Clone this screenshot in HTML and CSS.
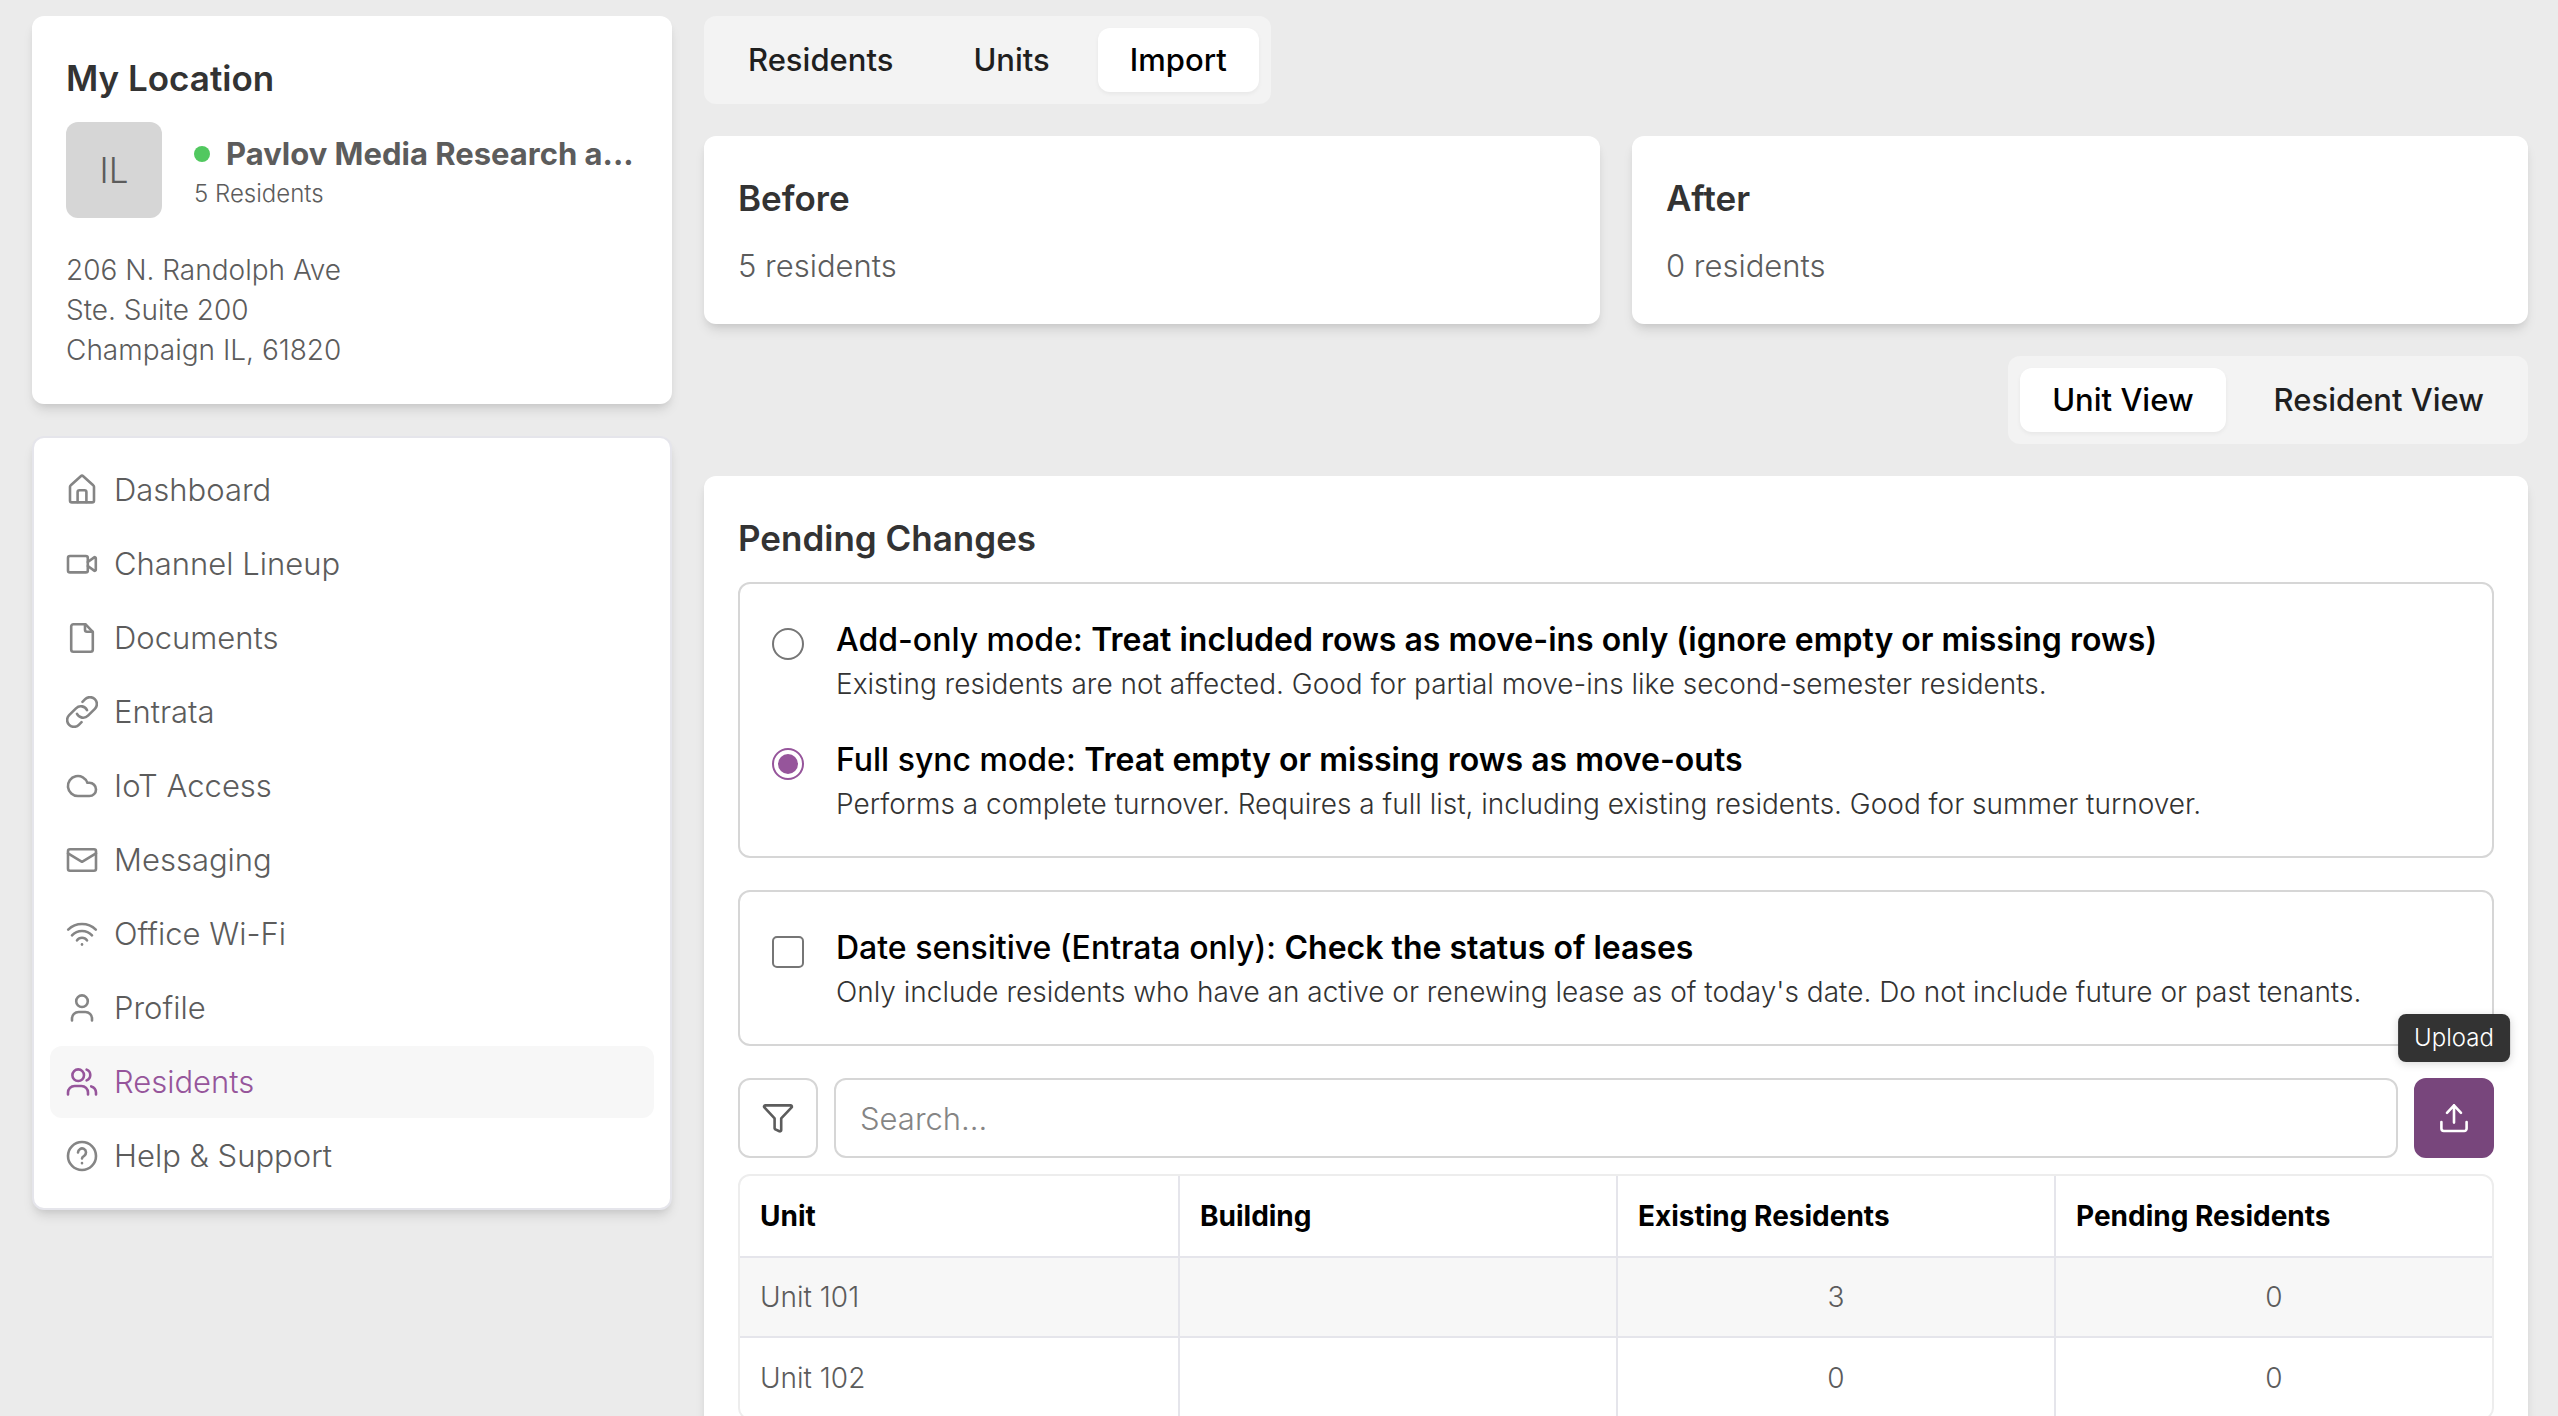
FILE: index.html
```html
<!DOCTYPE html>
<html lang="en">
<head>
    <meta charset="UTF-8">
    <meta name="viewport" content="width=device-width, initial-scale=1.0">
    <title>Residents - Import</title>
    <link rel="stylesheet" href="styles.css">
</head>
<body>
    <div class="layout">
        <!-- Sidebar -->
        <aside class="sidebar">
            <section class="card">
                <h2>My Location</h2>
                <div class="location">
                    <div class="avatar">IL</div>
                    <div class="location-info">
                        <div class="location-name"><span class="status-dot"></span><strong>Pavlov Media Research a...</strong></div>
                        <div class="location-count">5 Residents</div>
                    </div>
                </div>
                <address>
                    206 N. Randolph Ave<br>
                    Ste. Suite 200<br>
                    Champaign IL, 61820
                </address>
            </section>

            <nav class="menu">
                <a href="#dashboard">
                    <svg class="icon" viewBox="0 0 16 16"><path d="M2 6.400a1 1 0 0 1 .4-.8l5-4.500a.9.9 0 0 1 1.200 0l5 4.500a1 1 0 0 1 .4.800v6.800a1 1 0 0 1-1 1H3a1 1 0 0 1-1-1z"/><path d="M5.800 14V9a.9.9 0 0 1 .9-.9h2.600a.9.9 0 0 1 .9.900v5"/></svg>
                    Dashboard
                </a>
                <a href="#channels">
                    <svg class="icon" viewBox="0 0 16 16"><rect x="1" y="4" width="9.900" height="8.200" rx="1"/><path d="m10.900 7 3.200-2.300a.5.5 0 0 1 .8.400v5.800a.5.5 0 0 1-.8.400L10.900 9"/></svg>
                    Channel Lineup
                </a>
                <a href="#documents">
                    <svg class="icon" viewBox="0 0 16 16"><path d="M9.700 1.100H3.700a1.100 1.100 0 0 0-1.100 1.100v11.600a1.100 1.100 0 0 0 1.100 1.100h8.600a1.100 1.100 0 0 0 1.100-1.100V4.900z"/><path d="M9.500 1.200v2.700a1 1 0 0 0 1 1h2.800"/></svg>
                    Documents
                </a>
                <a href="#entrata">
                    <svg class="icon icon-link" viewBox="1.5 1.5 21 21"><path d="M13.190 8.688a4.500 4.500 0 0 1 1.242 7.244l-4.500 4.500a4.500 4.500 0 0 1-6.364-6.364l1.757-1.757m13.350-.622 1.757-1.757a4.500 4.500 0 0 0-6.364-6.364l-4.500 4.500a4.500 4.500 0 0 0 1.242 7.244" transform="matrix(0 -1 -1 0 24 24)"/></svg>
                    Entrata
                </a>
                <a href="#iot">
                    <svg class="icon" viewBox="0 0 16 16"><path d="M6 13h5.700a3.300 3.300 0 0 0 0-6.600h-1A5 5 0 1 0 6 13z"/></svg>
                    IoT Access
                </a>
                <a href="#messaging">
                    <svg class="icon" viewBox="0 0 16 16"><rect x="1" y="2.600" width="14" height="10.800" rx="1"/><path d="m1 4.700 7 4.200 7-4.200"/></svg>
                    Messaging
                </a>
                <a href="#wifi">
                    <svg class="icon" viewBox="0 0 16 16"><path d="M1.100 5.800a9.900 9.900 0 0 1 13.800 0M3 8.700a6.800 6.800 0 0 1 10 0M5.500 11.200a3 3 0 0 1 5 0"/><path d="M8 13.200v.1"/></svg>
                    Office Wi-Fi
                </a>
                <a href="#profile">
                    <svg class="icon" viewBox="0 0 16 16"><circle cx="8" cy="4.600" r="2.900"/><path d="M3 14.200v-.9A3.300 3.300 0 0 1 6.300 10h3.400a3.300 3.300 0 0 1 3.300 3.300v.9"/></svg>
                    Profile
                </a>
                <a href="#residents" class="active" aria-current="page">
                    <svg class="icon" viewBox="0 0 16 16"><circle cx="6.100" cy="4.600" r="2.900"/><path d="M1 14.200v-.9A3.300 3.300 0 0 1 4.300 10h3.400a3.300 3.300 0 0 1 3.300 3.300v.9M10.300 1.800a2.900 2.900 0 0 1 0 5.400M12.600 10.200a3.300 3.300 0 0 1 2.400 3.100v.9"/></svg>
                    Residents
                </a>
                <a href="#help">
                    <svg class="icon" viewBox="0 0 16 16"><circle cx="8" cy="8" r="7"/><path d="M6 6.200a2 2 0 1 1 3.100 1.700c-.7.400-1.100.7-1.100 1.300M8 11.500v.1"/></svg>
                    Help &amp; Support
                </a>
            </nav>
        </aside>

        <!-- Main content -->
        <main class="content">
            <div class="tabs">
                <button type="button">Residents</button>
                <button type="button">Units</button>
                <button type="button" class="active">Import</button>
            </div>

            <div class="summary">
                <section class="card">
                    <h2>Before</h2>
                    <p>5 residents</p>
                </section>
                <section class="card">
                    <h2>After</h2>
                    <p>0 residents</p>
                </section>
            </div>

            <div class="tabs tabs-right">
                <button type="button" class="active">Unit View</button>
                <button type="button">Resident View</button>
            </div>

            <section class="card">
                <h2>Pending Changes</h2>

                <div class="options">
                    <div class="option">
                        <input type="radio" name="mode" id="addOnly">
                        <label for="addOnly">
                            <span class="option-title">Add-only mode: <b>Treat included rows as move-ins only (ignore empty or missing rows)</b></span>
                            <span class="option-text">Existing residents are not affected. Good for partial move-ins like second-semester residents.</span>
                        </label>
                    </div>
                    <div class="option">
                        <input type="radio" name="mode" id="fullSync" checked>
                        <label for="fullSync">
                            <span class="option-title">Full sync mode: <b>Treat empty or missing rows as move-outs</b></span>
                            <span class="option-text">Performs a complete turnover. Requires a full list, including existing residents. Good for summer turnover.</span>
                        </label>
                    </div>
                </div>

                <div class="options">
                    <div class="option">
                        <input type="checkbox" id="dateSensitive">
                        <label for="dateSensitive">
                            <span class="option-title">Date sensitive (Entrata only): <b>Check the status of leases</b></span>
                            <span class="option-text">Only include residents who have an active or renewing lease as of today's date. Do not include future or past tenants.</span>
                        </label>
                    </div>
                </div>

                <div class="toolbar">
                    <button type="button" class="filter-btn" aria-label="Filter">
                        <svg class="icon" viewBox="0 0 16 16"><path d="M1.700 1.700h12.600a.6.6 0 0 1 .4 1.100L9.600 8.200v5.900a.6.6 0 0 1-.9.500l-2-.9a.6.6 0 0 1-.4-.5V8.200L1.300 2.800a.6.6 0 0 1 .4-1.100z"/></svg>
                    </button>
                    <input type="text" class="search" placeholder="Search..." aria-label="Search">
                    <div class="upload">
                        <button type="button" class="upload-btn" aria-label="Upload">
                            <svg class="icon" viewBox="0 0 16 16"><path d="M1.700 10v3.300a1.200 1.200 0 0 0 1.200 1.200h10.200a1.200 1.200 0 0 0 1.200-1.200V10M8 10.300V1.700M4.500 5.400 8 1.700l3.500 3.700"/></svg>
                        </button>
                        <span class="tooltip" role="tooltip">Upload</span>
                    </div>
                </div>

                <table>
                    <thead>
                        <tr>
                            <th>Unit</th>
                            <th>Building</th>
                            <th>Existing Residents</th>
                            <th>Pending Residents</th>
                        </tr>
                    </thead>
                    <tbody>
                        <tr>
                            <td>Unit 101</td>
                            <td></td>
                            <td class="count">3</td>
                            <td class="count">0</td>
                        </tr>
                        <tr>
                            <td>Unit 102</td>
                            <td></td>
                            <td class="count">0</td>
                            <td class="count">0</td>
                        </tr>
                    </tbody>
                </table>
            </section>
        </main>
    </div>
</body>
</html>
```
FILE: styles.css
```css
* {
    box-sizing: border-box;
}

body {
    margin: 0;
    background: #ebebeb;
    color: #5c5c5c;
    font-family: Inter, "Liberation Sans", sans-serif;
    font-size: 31px;
    font-weight: 300;
    line-height: 48px;
}

button,
input {
    font: inherit;
}

h2 {
    margin: 0 0 16px;
    color: #333;
    font-size: 35px;
    font-weight: 600;
    line-height: 56px;
}

p {
    margin: 0;
}

.layout {
    display: flex;
    align-items: flex-start;
    gap: 32px;
    height: 100vh;
    padding: 16px 30px 0 32px;
    overflow: hidden;
}

.sidebar {
    display: flex;
    flex: none;
    flex-direction: column;
    gap: 32px;
    width: 640px;
}

.content {
    display: flex;
    flex: 1;
    flex-direction: column;
    gap: 32px;
    min-width: 0;
}

.card {
    padding: 34px;
    background: #fff;
    border-radius: 12px;
    box-shadow: 0 8px 12px -2px rgba(0, 0, 0, 0.1), 0 4px 8px -4px rgba(0, 0, 0, 0.1);
}

.icon {
    flex: none;
    width: 32px;
    height: 32px;
    fill: none;
    stroke: currentColor;
    stroke-width: 1.3;
    stroke-linecap: round;
    stroke-linejoin: round;
}

.icon-link {
    stroke-width: 1.7;
}

/* Location card */
.location {
    display: flex;
    align-items: center;
    gap: 32px;
}

.avatar {
    flex: none;
    width: 96px;
    height: 96px;
    background: #d6d6d6;
    border-radius: 12px;
    font-size: 35px;
    line-height: 96px;
    text-align: center;
}

.location-info {
    min-width: 0;
}

.location-name {
    display: flex;
    align-items: center;
    gap: 16px;
}

.location-name strong {
    font-weight: 700;
    white-space: nowrap;
}

.status-dot {
    flex: none;
    width: 16px;
    height: 16px;
    background: #51c85f;
    border-radius: 50%;
}

.location-count {
    font-size: 24px;
    line-height: 32px;
}

address {
    margin-top: 32px;
    font-size: 28px;
    font-style: normal;
    line-height: 40px;
}

/* Side menu */
.menu {
    display: flex;
    flex-direction: column;
    gap: 2px;
    padding: 16px;
    background: #fff;
    border: 2px solid #e5e5eb;
    border-radius: 12px;
    box-shadow: 0 8px 12px -2px rgba(0, 0, 0, 0.1), 0 4px 8px -4px rgba(0, 0, 0, 0.1);
}

.menu a {
    display: flex;
    align-items: center;
    gap: 16px;
    padding: 12px 16px;
    border-radius: 12px;
    color: #5c5c5c;
    text-decoration: none;
}

.menu .icon {
    color: #858585;
}

.menu .active {
    background: #f7f7f7;
}

.menu .active,
.menu .active .icon {
    color: #96559b;
}

/* Tabs */
.tabs {
    display: flex;
    align-self: flex-start;
    gap: 16px;
    padding: 12px;
    background: #f3f3f3;
    border-radius: 12px;
}

.tabs-right {
    align-self: flex-end;
}

.tabs button {
    padding: 8px 32px;
    background: none;
    border: none;
    border-radius: 12px;
    color: #1f1f1f;
    font-weight: 500;
    cursor: pointer;
}

.tabs .active {
    background: #fff;
    box-shadow: 0 2px 4px rgba(0, 0, 0, 0.05);
    color: #000;
}

.summary {
    display: grid;
    grid-template-columns: 1fr 1fr;
    gap: 32px;
}

/* Import options */
.options {
    display: flex;
    flex-direction: column;
    gap: 32px;
    margin-bottom: 32px;
    padding: 32px;
    border: 2px solid #d6d6d6;
    border-radius: 12px;
}

.option {
    display: flex;
    align-items: flex-start;
    gap: 32px;
}

.option input {
    display: grid;
    flex: none;
    width: 32px;
    height: 32px;
    margin: 12px 0 0;
    appearance: none;
    background: #fff;
    border: 2px solid #767676;
    border-radius: 50%;
    place-content: center;
}

.option input[type="checkbox"] {
    border-radius: 5px;
}

.option input:checked {
    border-color: #96559b;
}

.option input:checked::before {
    width: 20px;
    height: 20px;
    background: #96559b;
    border-radius: 50%;
    content: "";
}

.option-title,
.option-text {
    display: block;
}

.option-title {
    color: #000;
    font-size: 32px;
    font-weight: 500;
}

.option-title b {
    font-weight: 600;
}

.option-text {
    color: #333;
    font-size: 28px;
    line-height: 40px;
}

/* Toolbar */
.toolbar {
    display: flex;
    gap: 16px;
    margin-bottom: 16px;
}

.filter-btn,
.upload-btn {
    display: flex;
    align-items: center;
    justify-content: center;
    width: 80px;
    height: 80px;
    padding: 0;
    background: #fff;
    border: 2px solid #d6d6d6;
    border-radius: 12px;
    color: #5c5c5c;
    cursor: pointer;
}

.search {
    flex: 1;
    min-width: 0;
    height: 80px;
    padding: 0 24px;
    border: 2px solid #d6d6d6;
    border-radius: 12px;
}

.search::placeholder {
    color: #858585;
}

.upload {
    position: relative;
}

.upload-btn {
    background: #78467c;
    border-color: #78467c;
    color: #fff;
}

.tooltip {
    position: absolute;
    bottom: 96px;
    left: 50%;
    padding: 8px 16px;
    background: #333;
    border-radius: 8px;
    box-shadow: 0 2px 8px rgba(0, 0, 0, 0.15);
    color: #fff;
    font-size: 24px;
    line-height: 32px;
    transform: translateX(-50%);
}

/* Units table */
table {
    width: 100%;
    border: 2px solid #ededed;
    border-radius: 12px;
    border-spacing: 0;
    font-size: 28px;
    line-height: 40px;
    table-layout: fixed;
}

th,
td {
    height: 80px;
    padding: 0 20px;
    border-bottom: 2px solid #e5e5eb;
    text-align: left;
}

th {
    height: 82px;
    color: #000;
    font-weight: 700;
}

th + th,
td + td {
    border-left: 2px solid #e5e5eb;
}

tbody tr:nth-child(odd) {
    background: #f7f7f7;
}

tbody tr:last-child td {
    border-bottom: none;
}

.count {
    text-align: center;
}
```
